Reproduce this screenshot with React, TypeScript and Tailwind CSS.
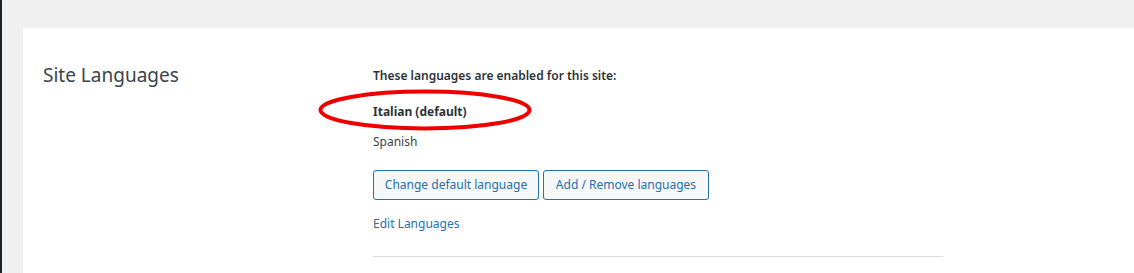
export default function App() {
  return (
    <div className="flex h-[273px] w-full overflow-hidden bg-[#f0f0f0] font-['Noto_Sans',sans-serif] text-[12px] text-[#3c434a]">
      <div className="w-[2px] shrink-0 bg-[#1d2327]" />
      <div className="flex-1 pl-[21px] pt-[28px]">
        <div className="relative flex h-full bg-white pl-[20px] pt-[38px]">
          <h2 className="-mt-px w-[330px] shrink-0 text-[19px] leading-[20px] font-normal text-[#3c434a]">
            Site Languages
          </h2>
          <div className="w-[570px]">
            <p className="leading-[20px] font-semibold text-[#2c3338]">
              These languages are enabled for this site:
            </p>
            <p className="relative mt-[16px] leading-[20px] font-bold text-[#2c3338]">
              Italian (default)
              <svg
                className="pointer-events-none absolute left-[-55px] top-[-14px]"
                width="216"
                height="44"
                viewBox="0 0 216 44"
              >
                <ellipse cx="107" cy="22" rx="104.5" ry="18.5" fill="none" stroke="#ee0000" strokeWidth="4" />
              </svg>
            </p>
            <p className="mt-[10px] leading-[20px]">Spanish</p>
            <div className="mt-[18px] flex gap-[4px]">
              <button className="h-[30px] w-[166px] rounded-[3px] border border-[#2271b1] bg-[#f6f7f7] text-[12px] text-[#2271b1]">
                Change default language
              </button>
              <button className="h-[30px] w-[166px] rounded-[3px] border border-[#2271b1] bg-[#f6f7f7] text-[12px] text-[#2271b1]">
                Add / Remove languages
              </button>
            </div>
            <p className="mt-[14px] leading-[20px] text-[#2271b1]">Edit Languages</p>
            <div className="mt-[22px] h-px w-full bg-[#dcdcde]" />
          </div>
        </div>
      </div>
    </div>
  );
}
